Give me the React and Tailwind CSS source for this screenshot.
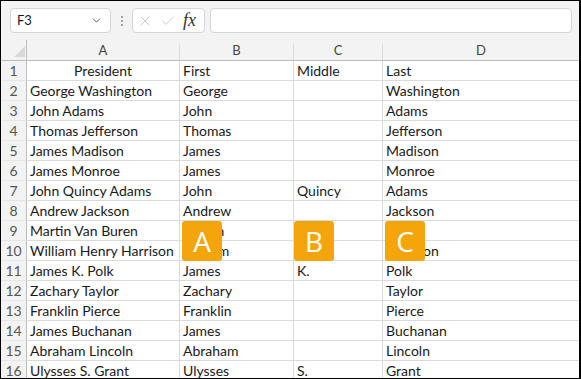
import { ChevronDown, X, Check } from 'lucide-react';

const rows = [
  ['President', 'First', 'Middle', 'Last'],
  ['George Washington', 'George', '', 'Washington'],
  ['John Adams', 'John', '', 'Adams'],
  ['Thomas Jefferson', 'Thomas', '', 'Jefferson'],
  ['James Madison', 'James', '', 'Madison'],
  ['James Monroe', 'James', '', 'Monroe'],
  ['John Quincy Adams', 'John', 'Quincy', 'Adams'],
  ['Andrew Jackson', 'Andrew', '', 'Jackson'],
  ['Martin Van Buren', 'Martin', 'Van', 'Buren'],
  ['William Henry Harrison', 'William', '', 'Harrison'],
  ['James K. Polk', 'James', 'K.', 'Polk'],
  ['Zachary Taylor', 'Zachary', '', 'Taylor'],
  ['Franklin Pierce', 'Franklin', '', 'Pierce'],
  ['James Buchanan', 'James', '', 'Buchanan'],
  ['Abraham Lincoln', 'Abraham', '', 'Lincoln'],
  ['Ulysses S. Grant', 'Ulysses', 'S.', 'Grant'],
];

const cols = 'grid grid-cols-[26px_153px_114px_89px_1fr]';

// orange callout badges over the columns
function Badge({ letter, className }) {
  return (
    <div className={`absolute w-[40px] h-[40px] rounded-[3px] bg-[#f5a50c] text-white flex items-center justify-center text-[28px] font-['Open_Sans',sans-serif] ${className}`}>
      {letter}
    </div>
  );
}

export default function App() {
  return (
    <div className="w-[581px] h-[379px] border border-black border-r-2 bg-white overflow-hidden font-['Lato',sans-serif] text-[#1a1a1a]">
      {/* formula bar */}
      <div className="h-[39px] bg-[#f3f3f3] flex items-center pl-[9px] pr-[7px]">
        <div className="w-[101px] h-[25px] bg-white border border-[#d6d6d6] rounded-[4px] flex items-center justify-between pl-[6px] pr-[7px] text-[13px]">
          <span>F3</span>
          <ChevronDown size={13} strokeWidth={1.6} className="text-[#444]" />
        </div>
        <div className="w-[21px] flex flex-col items-center gap-[2px]">
          <span className="w-[2px] h-[2px] bg-[#888] rounded-full" />
          <span className="w-[2px] h-[2px] bg-[#888] rounded-full" />
          <span className="w-[2px] h-[2px] bg-[#888] rounded-full" />
        </div>
        <div className="w-[73px] h-[25px] bg-white border border-[#d6d6d6] rounded-[4px] flex items-center pl-[4px] gap-[7px]">
          <X size={16} strokeWidth={1.1} className="text-[#b5b5b5]" />
          <Check size={16} strokeWidth={1.1} className="text-[#b5b5b5]" />
          <span className="font-['Liberation_Serif',serif] italic text-[18px] text-[#333] leading-none -mt-[2px]">fx</span>
        </div>
        <div className="ml-[5px] flex-1 h-[25px] bg-white border border-[#d6d6d6] rounded-[4px]" />
      </div>

      {/* grid */}
      <div className="relative">
        <div className={`${cols} h-[21px] bg-[#f3f3f3] border-b border-[#bdbdbd] text-[13px] text-[#444]`}>
          <div className="relative border-r border-[#bdbdbd]">
            <svg className="absolute left-[13px] top-[6px]" width="11" height="11" viewBox="0 0 11 11">
              <polygon points="11,0 11,11 0,11" fill="#d9d9d9" />
            </svg>
          </div>
          {['A', 'B', 'C', 'D'].map((c) => (
            <div key={c} className="flex items-center justify-center border-r border-[#dcdcdc] last:border-r-0 mt-[4px] h-[16px] pb-[3px]">
              {c}
            </div>
          ))}
        </div>
        {rows.map((r, i) => (
          <div key={i} className={`${cols} h-[20px] text-[14px] leading-[19px]`}>
            <div className="bg-[#f3f3f3] border-r border-b border-[#bdbdbd] border-b-[#e6e6e6] text-center text-[#555]">
              {i + 1}
            </div>
            {r.map((v, j) => (
              <div
                key={j}
                className={`border-r border-b border-[#dadada] px-[3px] whitespace-nowrap overflow-hidden ${i === 0 && j === 0 ? 'text-center' : ''} ${j === 3 ? 'border-r-0' : ''}`}
              >
                {v}
              </div>
            ))}
          </div>
        ))}
        <Badge letter="A" className="left-[181px] top-[181px]" />
        <Badge letter="B" className="left-[293px] top-[181px]" />
        <Badge letter="C" className="left-[384px] top-[181px]" />
      </div>
    </div>
  );
}
